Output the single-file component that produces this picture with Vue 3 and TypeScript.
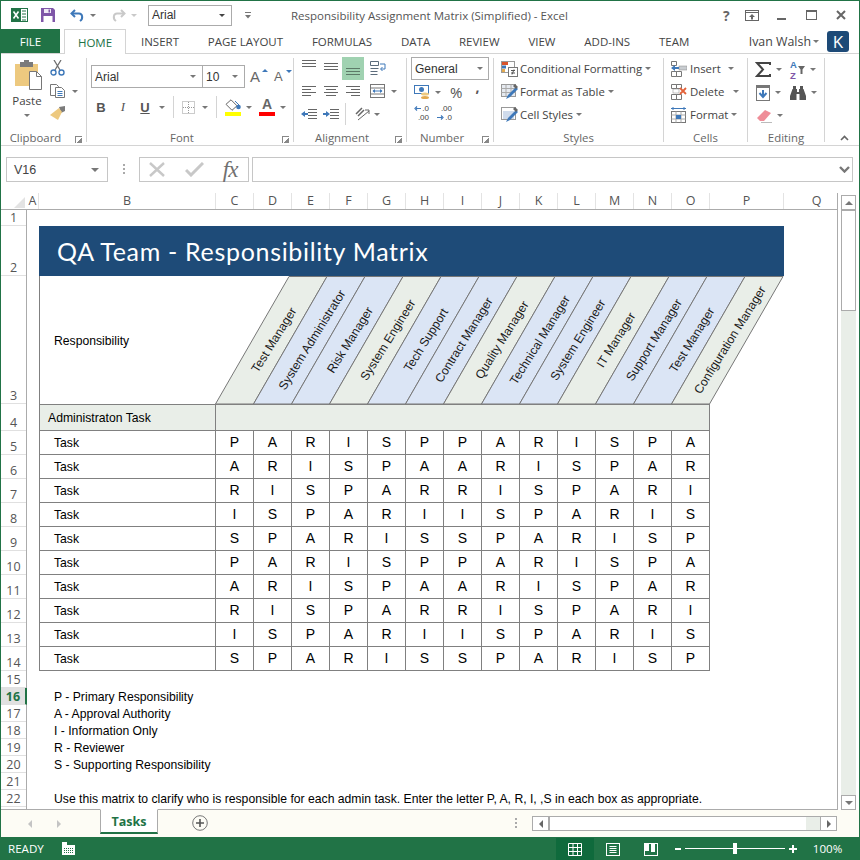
<script setup lang="ts">
const tabs: string[] = ['INSERT', 'PAGE LAYOUT', 'FORMULAS', 'DATA', 'REVIEW', 'VIEW', 'ADD-INS', 'TEAM']
const columns: string[] = ['A', 'B', 'C', 'D', 'E', 'F', 'G', 'H', 'I', 'J', 'K', 'L', 'M', 'N', 'O', 'P', 'Q']

// sheet row heights, row 1 to row 22
const rowHeights: number[] = [16, 50, 128, 27, ...Array(10).fill(24), ...Array(8).fill(17)]

const roles: string[] = [
  'Test Manager', 'System Administrator', 'Risk Manager', 'System Engineer', 'Tech Support',
  'Contract Manager', 'Quality Manager', 'Technical Manager', 'System Engineer', 'IT Manager',
  'Support Manager', 'Test Manager', 'Configuration Manager'
]

const cycle: string[][] = [
  ['P', 'A', 'R', 'I', 'S', 'P', 'P', 'A', 'R', 'I', 'S', 'P', 'A'],
  ['A', 'R', 'I', 'S', 'P', 'A', 'A', 'R', 'I', 'S', 'P', 'A', 'R'],
  ['R', 'I', 'S', 'P', 'A', 'R', 'R', 'I', 'S', 'P', 'A', 'R', 'I'],
  ['I', 'S', 'P', 'A', 'R', 'I', 'I', 'S', 'P', 'A', 'R', 'I', 'S'],
  ['S', 'P', 'A', 'R', 'I', 'S', 'S', 'P', 'A', 'R', 'I', 'S', 'P']
]
const taskRows: string[][] = [...cycle, ...cycle]

const legend: string[] = [
  'P - Primary Responsibility',
  'A - Approval Authority',
  'I - Information Only',
  'R - Reviewer',
  'S - Supporting Responsibility'
]

// every third column has the grey-green tint, the others are blue
function slantFill(i: number): string {
  return i % 3 === 0 ? '#e9eee8' : '#dbe5f5'
}

function slantPoints(i: number): string {
  const x = i * 38
  return `${x - 0.5},128 ${x + 37.5},128 ${x + 111},0.5 ${x + 73},0.5`
}
</script>

<template>
  <div class="window">
    <!-- title bar -->
    <div class="titlebar">
      <svg class="xl-icon" width="17" height="16" viewBox="0 0 17 16">
        <rect x="5.5" y="1.5" width="11" height="13" fill="#fff" stroke="#217346" />
        <path d="M11 4h4M11 7h4M11 10h4M11 13h4" stroke="#217346" />
        <rect x="0" y="1" width="10" height="14" fill="#217346" />
        <path d="M2.5 4.5l5 7M7.5 4.5l-5 7" stroke="#fff" stroke-width="1.6" />
      </svg>
      <svg class="save-icon" width="14" height="14" viewBox="0 0 14 14">
        <path d="M0 0h12l2 2v12H0z" fill="#7f56a8" />
        <rect x="3" y="1" width="7" height="4" fill="#efe8f5" />
        <rect x="2.5" y="8" width="9" height="6" fill="#fff" />
        <rect x="7.5" y="1.5" width="1.5" height="3" fill="#7f56a8" />
      </svg>
      <svg class="undo-icon" width="15" height="13" viewBox="0 0 15 13">
        <path d="M5 1L1.5 4.5 5 8" fill="none" stroke="#3e78b9" stroke-width="2" />
        <path d="M2 4.5h7c3.500 0 4.500 5 1 7.500" fill="none" stroke="#3e78b9" stroke-width="2" />
      </svg>
      <i class="caret qat-caret"></i>
      <svg class="redo-icon" width="15" height="13" viewBox="0 0 15 13">
        <path d="M10 1l3.500 3.500L10 8" fill="none" stroke="#c9c9c9" stroke-width="2" />
        <path d="M13 4.500H6c-3.500 0-4.500 5-1 7.500" fill="none" stroke="#c9c9c9" stroke-width="2" />
      </svg>
      <i class="caret qat-caret light"></i>
      <div class="qat-font">
        <span>Arial</span>
        <i class="caret dark"></i>
      </div>
      <svg class="custom-icon" width="6" height="7" viewBox="0 0 6 7">
        <path d="M0 .5h6" stroke="#777" />
        <path d="M0 3h6L3 6.500z" fill="#777" />
      </svg>
      <span class="doc-title">Responsibility Assignment Matrix (Simplified) - Excel</span>
      <span class="help">?</span>
      <svg class="display-icon" width="14" height="11" viewBox="0 0 14 11">
        <rect x=".5" y=".5" width="13" height="10" fill="none" stroke="#666" />
        <path d="M.5 2.500h13" stroke="#666" />
        <path d="M7 4l3 3H8v2.500H6V7H4z" fill="#666" />
      </svg>
      <svg class="min-icon" width="9" height="2" viewBox="0 0 9 2"><rect width="9" height="2" fill="#666" /></svg>
      <svg class="max-icon" width="11" height="10" viewBox="0 0 11 10">
        <rect x=".5" y=".5" width="10" height="9" fill="none" stroke="#666" />
        <rect width="11" height="2" fill="#666" />
      </svg>
      <svg class="close-icon" width="10" height="10" viewBox="0 0 10 10">
        <path d="M1 1l8 8M9 1L1 9" stroke="#666" stroke-width="2" />
      </svg>
    </div>

    <!-- ribbon tabs -->
    <div class="tabbar">
      <div class="file-tab">FILE</div>
      <div class="home-tab">HOME</div>
      <div class="tab-list">
        <span v-for="tab in tabs" :key="tab">{{ tab }}</span>
      </div>
      <span class="user">Ivan Walsh</span>
      <i class="caret user-caret"></i>
      <div class="avatar">K</div>
    </div>

    <!-- ribbon -->
    <div class="ribbon">
      <section class="group clipboard">
        <div class="clip-body">
          <div class="paste">
            <svg width="29" height="30" viewBox="0 0 29 30">
              <rect x="1" y="4" width="23" height="22" fill="#edc97f" />
              <rect x="6" y="2" width="13" height="5" fill="#7b7b7b" />
              <rect x="10" y="0" width="5" height="3" fill="#7b7b7b" />
              <path d="M15.500 11.500h7l5 5v13h-12z" fill="#fff" stroke="#777" />
              <path d="M22.500 11.500v5h5" fill="none" stroke="#777" />
            </svg>
            <span>Paste</span>
            <i class="caret"></i>
          </div>
          <div class="clip-tools">
            <svg width="15" height="16" viewBox="0 0 15 16">
              <path d="M4 0l6 10M11 0L5 10" stroke="#6f6f6f" stroke-width="1.300" />
              <circle cx="3.500" cy="12.500" r="2.500" fill="none" stroke="#3e78b9" stroke-width="1.400" />
              <circle cx="11.500" cy="12.500" r="2.500" fill="none" stroke="#3e78b9" stroke-width="1.400" />
            </svg>
            <div class="tool-line">
              <svg width="16" height="14" viewBox="0 0 16 14">
                <path d="M.5.500h6l2 2v9H.5z" fill="#fff" stroke="#777" />
                <path d="M5.500 3.500h6l3 3v7h-9z" fill="#fff" stroke="#777" />
                <path d="M7.500 7.500h5M7.500 9.500h5M7.500 11.500h5" stroke="#3e78b9" />
              </svg>
              <i class="caret"></i>
            </div>
            <svg width="16" height="14" viewBox="0 0 16 14">
              <path d="M9 1l6-1v5l-4 2z" fill="#7b7b7b" />
              <path d="M9 2l3 4-4 8-8-5z" fill="#edc97f" />
            </svg>
          </div>
        </div>
        <footer class="with-launcher">Clipboard</footer>
        <i class="launcher"></i>
      </section>

      <section class="group font">
        <div class="font-select">
          <div class="fbox name"><span>Arial</span><i class="caret"></i></div>
          <div class="fbox size"><span>10</span><i class="caret"></i></div>
          <span class="grow">A<i class="up"></i></span>
          <span class="shrink">A<i class="down"></i></span>
        </div>
        <div class="font-tools">
          <b>B</b>
          <em>I</em>
          <u>U</u>
          <i class="caret c-u"></i>
          <span class="sep"></span>
          <svg width="13" height="13" viewBox="0 0 13 13">
            <rect x=".5" y=".5" width="12" height="12" fill="none" stroke="#999" stroke-dasharray="1 1" />
            <path d="M6.500 1v11M1 6.500h11" stroke="#999" stroke-dasharray="1 1" />
          </svg>
          <i class="caret c-border"></i>
          <span class="sep"></span>
          <div class="fill-tool">
            <svg width="16" height="12" viewBox="0 0 16 12">
              <path d="M6 .8l6 6-5 4.500-6-6z" fill="#fff" stroke="#666" />
              <circle cx="13.500" cy="8" r="2.300" fill="#3e78b9" />
              <path d="M10 2l4 4" stroke="#3e78b9" />
            </svg>
            <span class="swatch yellow"></span>
          </div>
          <i class="caret c-fill"></i>
          <div class="color-tool">
            <span>A</span>
            <span class="swatch red"></span>
          </div>
          <i class="caret c-fill"></i>
        </div>
        <footer class="with-launcher">Font</footer>
        <i class="launcher"></i>
      </section>

      <section class="group alignment">
        <div class="align-row first">
          <svg class="lines v-top" width="14" height="8" viewBox="0 0 14 8"><path d="M0 .5h14M0 3.500h14M0 6.500h14" stroke="#666" /></svg>
          <svg class="lines v-mid" width="14" height="8" viewBox="0 0 14 8"><path d="M0 .5h14M0 3.500h14M0 6.500h14" stroke="#666" /></svg>
          <span class="align-on">
            <svg class="lines" width="14" height="8" viewBox="0 0 14 8"><path d="M0 .5h14M0 3.500h14M0 6.500h14" stroke="#5d7a68" /></svg>
          </span>
          <svg width="16" height="15" viewBox="0 0 16 15">
            <path d="M.5 .5h8v4h-8zM.5 7.500h8M.5 10.500h7M.5 13.500h7" fill="none" stroke="#5c6c7c" />
            <path d="M10 3h5v5h-4M12.500 6l-2 2 2 2" fill="none" stroke="#3e78b9" />
          </svg>
        </div>
        <div class="align-row second">
          <svg class="lines" width="14" height="11" viewBox="0 0 14 11"><path d="M0 .5h14M0 3.500h9M0 6.500h14M0 9.500h9" stroke="#666" /></svg>
          <svg class="lines" width="14" height="11" viewBox="0 0 14 11"><path d="M0 .5h14M2 3.500h10M0 6.500h14M2 9.500h10" stroke="#666" /></svg>
          <svg class="lines" width="14" height="11" viewBox="0 0 14 11"><path d="M0 .5h14M5 3.500h9M0 6.500h14M5 9.500h9" stroke="#666" /></svg>
          <svg class="merge" width="15" height="14" viewBox="0 0 15 14">
            <rect x=".5" y=".5" width="14" height="13" fill="none" stroke="#777" />
            <path d="M.5 4h14M.5 10h14" stroke="#777" />
            <path d="M3 7h9" stroke="#3e78b9" />
            <path d="M5 5l-2.500 2L5 9zM10 5l2.500 2L10 9z" fill="#3e78b9" />
          </svg>
          <i class="caret"></i>
        </div>
        <div class="align-row third">
          <svg width="16" height="11" viewBox="0 0 16 11">
            <path d="M7 .5h9M7 3.500h9M7 6.500h9M7 9.500h9" stroke="#666" />
            <path d="M0 5l4-3v2h3v2H4v2z" fill="#3e78b9" />
          </svg>
          <svg width="16" height="11" viewBox="0 0 16 11">
            <path d="M7 .5h9M7 3.500h9M7 6.500h9M7 9.500h9" stroke="#666" />
            <path d="M7 5L3 2v2H0v2h3v2z" fill="#3e78b9" />
          </svg>
          <span class="sep"></span>
          <svg class="orient" width="15" height="14" viewBox="0 0 15 14">
            <path d="M1 7l6-6M3 9l6-6" stroke="#666" stroke-width="1.500" />
            <path d="M3 13L14 4" stroke="#666" />
            <path d="M14 3v4M14 3h-4" stroke="#666" />
          </svg>
          <i class="caret"></i>
        </div>
        <footer class="with-launcher">Alignment</footer>
        <i class="launcher"></i>
      </section>

      <section class="group number">
        <div class="num-select"><span>General</span><i class="caret"></i></div>
        <div class="num-row">
          <svg width="16" height="15" viewBox="0 0 16 15">
            <rect x=".5" y=".5" width="14" height="8" fill="#fff" stroke="#3e78b9" />
            <circle cx="7.500" cy="4.500" r="2.500" fill="#3e78b9" />
            <ellipse cx="11" cy="9" rx="4" ry="1.600" fill="#edc97f" />
            <ellipse cx="11" cy="12.500" rx="4" ry="1.600" fill="#e2a94f" />
          </svg>
          <i class="caret"></i>
          <span class="pct">%</span>
          <span class="comma">,</span>
        </div>
        <div class="num-row decimals">
          <div class="dec">
            <div class="dec-line">
              <svg width="7" height="5" viewBox="0 0 7 5"><path d="M7 2.500H2M3 .5L1 2.500l2 2" fill="none" stroke="#3e78b9" stroke-width="1.200" /></svg>
              <span>.0</span>
            </div>
            <span>.00</span>
          </div>
          <div class="dec two">
            <span>.00</span>
            <div class="dec-line">
              <svg width="7" height="5" viewBox="0 0 7 5"><path d="M0 2.500h5M4 .5l2 2-2 2" fill="none" stroke="#3e78b9" stroke-width="1.200" /></svg>
              <span>.0</span>
            </div>
          </div>
        </div>
        <footer class="with-launcher">Number</footer>
        <i class="launcher"></i>
      </section>

      <section class="group styles">
        <div class="style-row">
          <svg width="17" height="16" viewBox="0 0 17 16">
            <rect x=".5" y=".5" width="13" height="11" fill="#fff" stroke="#999" />
            <rect x="1" y="1" width="6" height="3" fill="#d9542b" />
            <rect x="1" y="4.500" width="4" height="3" fill="#3e78b9" />
            <rect x="1" y="8" width="3" height="3" fill="#e2a94f" />
            <rect x="7.500" y="6.500" width="9" height="9" fill="#fff" stroke="#777" />
            <path d="M10 9.500h4M10 12h4M13 8.500l-2 5" stroke="#555" />
          </svg>
          <span>Conditional Formatting</span><i class="caret"></i>
        </div>
        <div class="style-row">
          <svg width="17" height="16" viewBox="0 0 17 16">
            <rect x=".5" y=".5" width="14" height="12" fill="#e6eaf0" stroke="#999" />
            <path d="M.5 4.500h14M.5 8.500h14M5 .5v12M10 .5v12" stroke="#aaa" />
            <path d="M5 15l2-4 8-8 2 2-8 8z" fill="#3e78b9" />
            <path d="M12 2l2-2 3 3-2 2z" fill="#666" />
          </svg>
          <span>Format as Table</span><i class="caret"></i>
        </div>
        <div class="style-row">
          <svg width="17" height="16" viewBox="0 0 17 16">
            <rect x=".5" y=".5" width="14" height="12" fill="#fff" stroke="#999" />
            <rect x="2" y="4" width="11" height="8" fill="#cfdbec" />
            <path d="M5 15l2-4 8-8 2 2-8 8z" fill="#3e78b9" />
            <path d="M12 2l2-2 3 3-2 2z" fill="#666" />
          </svg>
          <span>Cell Styles</span><i class="caret"></i>
        </div>
        <footer>Styles</footer>
      </section>

      <section class="group cells">
        <div class="cell-row">
          <svg width="16" height="16" viewBox="0 0 16 16">
            <path d="M.5.500h5v4h-5zM.5 10.500h5v5h-5zM5.500 10.500h5v5h-5z" fill="#fff" stroke="#777" />
            <rect x="8" y="5" width="8" height="4" fill="#c8ccd0" stroke="#888" stroke-width=".5" />
            <path d="M0 7l4-3v2h4v2H4v2z" fill="#3e78b9" />
          </svg>
          <span>Insert</span><i class="caret insert"></i>
        </div>
        <div class="cell-row">
          <svg width="16" height="16" viewBox="0 0 16 16">
            <path d="M.5.500h5v4h-5zM5.500.500h5v4h-5zM.5 10.500h5v5h-5zM5.500 10.500h5v5h-5z" fill="#fff" stroke="#777" />
            <rect x="2" y="5" width="6" height="4" fill="#fff" stroke="#888" stroke-width=".5" />
            <path d="M9 4l6 6M15 4l-6 6" stroke="#e2633b" stroke-width="1.800" />
          </svg>
          <span>Delete</span><i class="caret delete"></i>
        </div>
        <div class="cell-row">
          <svg width="16" height="16" viewBox="0 0 16 16">
            <path d="M0 1.500h15M2 0v3M13 0v3" stroke="#3e78b9" />
            <rect x=".5" y="4.500" width="14" height="11" fill="#fff" stroke="#777" />
            <path d="M.5 8h14M.5 12h14M5 4.500v11M10 4.500v11" stroke="#aaa" />
            <rect x="5" y="8" width="5" height="4" fill="#3e78b9" />
          </svg>
          <span>Format</span><i class="caret format"></i>
        </div>
        <footer>Cells</footer>
      </section>

      <section class="group editing">
        <div class="edit-row">
          <svg class="sigma" width="16" height="15" viewBox="0 0 16 15">
            <path d="M15 3V1H2l6 6.500L2 14h13v-2" fill="none" stroke="#444" stroke-width="2" />
          </svg>
          <i class="caret"></i>
          <div class="sort">
            <span class="sort-letters"><span class="a">A</span><span class="z">Z</span></span>
            <svg width="7" height="8" viewBox="0 0 7 8"><path d="M0 0h7L4.500 3.500V8h-2V3.500z" fill="#666" /></svg>
          </div>
          <i class="caret"></i>
        </div>
        <div class="edit-row">
          <svg class="fill-down" width="14" height="16" viewBox="0 0 14 16">
            <rect x=".5" y=".5" width="13" height="15" fill="#fff" stroke="#777" />
            <rect y="0" width="14" height="3" fill="#777" />
            <path d="M7 5v6M3.500 8L7 12l3.500-4" fill="none" stroke="#3e78b9" stroke-width="2" />
          </svg>
          <i class="caret"></i>
          <svg class="binoc" width="16" height="14" viewBox="0 0 16 14">
            <rect x="3" y="0" width="3" height="4" fill="#555" />
            <rect x="10" y="0" width="3" height="4" fill="#555" />
            <path d="M2.500 3h4.500v3h2V3h4.500L16 10v4H9.500V8h-3v6H0v-4z" fill="#555" />
          </svg>
          <i class="caret"></i>
        </div>
        <div class="edit-row">
          <svg class="eraser" width="16" height="14" viewBox="0 0 16 14">
            <path d="M1 9l8-8 6 3-7 8H4z" fill="#ef8d98" />
            <path d="M5 14h11" stroke="#777" />
          </svg>
          <i class="caret"></i>
        </div>
        <footer>Editing</footer>
      </section>

      <svg class="collapse" width="9" height="6" viewBox="0 0 9 6">
        <path d="M1 5l3.500-3.500L8 5" fill="none" stroke="#666" stroke-width="1.600" />
      </svg>
    </div>

    <!-- formula bar -->
    <div class="formula-bar">
      <div class="name-box"><span>V16</span><i class="caret"></i></div>
      <span class="grip"></span>
      <div class="fx-box">
        <svg width="16" height="15" viewBox="0 0 16 15"><path d="M1 1l14 13M15 1L1 14" stroke="#c8c8c8" stroke-width="2.400" /></svg>
        <svg width="19" height="15" viewBox="0 0 19 15"><path d="M1 8l5 5L18 1" fill="none" stroke="#c8c8c8" stroke-width="3" /></svg>
        <span class="fx">fx</span>
      </div>
      <div class="formula-input">
        <svg width="11" height="7" viewBox="0 0 11 7"><path d="M1 1l4.500 4.500L10 1" fill="none" stroke="#777" stroke-width="2.400" /></svg>
      </div>
    </div>

    <!-- worksheet -->
    <div class="sheet-row">
      <div class="sheet">
        <div class="col-heads">
          <div class="corner"><i></i></div>
          <div class="col-labels">
            <span v-for="col in columns" :key="col">{{ col }}</span>
          </div>
        </div>
        <div class="sheet-body">
          <div class="row-heads">
            <div
              v-for="(height, i) in rowHeights"
              :key="i"
              class="row-head"
              :class="{ active: i === 15 }"
              :style="{ height: height + 'px' }"
            >
              {{ i + 1 }}
            </div>
          </div>
          <div class="cells-grid">
            <div class="spacer"></div>
            <div class="band">QA Team - Responsibility Matrix</div>
            <div class="resp">Responsibility</div>
            <svg class="slants" width="568" height="128" viewBox="0 0 568 128">
              <template v-for="(role, i) in roles" :key="i">
                <polygon :points="slantPoints(i)" :fill="slantFill(i)" stroke="#777" />
                <text
                  :transform="`translate(${58 + i * 38} 64) rotate(-58)`"
                  text-anchor="middle"
                  y="4"
                >{{ role }}</text>
              </template>
            </svg>
            <div class="admin">Administraton Task</div>
            <div class="admin-span"></div>
            <template v-for="(row, r) in taskRows" :key="r">
              <div class="task">Task</div>
              <div v-for="(mark, c) in row" :key="c" class="mark">{{ mark }}</div>
            </template>
            <div class="spacer"></div>
            <div v-for="line in legend" :key="line" class="note">{{ line }}</div>
            <div class="spacer"></div>
            <div class="note">Use this matrix to clarify who is responsible for each admin task. Enter the letter P, A, R, I, ,S in each box as appropriate.</div>
          </div>
        </div>
      </div>
      <div class="vscroll">
        <div class="vbtn"><i class="tri-up"></i></div>
        <div class="vthumb"></div>
        <div class="vtrack"></div>
        <div class="vbtn"><i class="tri-down"></i></div>
      </div>
    </div>

    <!-- sheet tabs -->
    <div class="sheet-tabs">
      <i class="nav-left"></i>
      <i class="nav-right"></i>
      <div class="sheet-tab">Tasks</div>
      <svg class="add-sheet" width="16" height="16" viewBox="0 0 16 16">
        <circle cx="8" cy="8" r="7.300" fill="none" stroke="#777" />
        <path d="M8 4v8M4 8h8" stroke="#555" stroke-width="1.600" />
      </svg>
      <span class="tab-grip"></span>
      <div class="hscroll">
        <div class="hbtn"><i class="tri-left"></i></div>
        <div class="hthumb"></div>
        <div class="htrack"></div>
        <div class="hbtn"><i class="tri-right"></i></div>
      </div>
    </div>

    <!-- status bar -->
    <div class="statusbar">
      <span class="ready">READY</span>
      <svg class="macro" width="13" height="13" viewBox="0 0 13 13">
        <rect x="0" y="3" width="13" height="10" fill="#fff" />
        <rect x="0" y="0" width="5" height="5" fill="#fff" />
        <path d="M2 6.500h9M2 8.500h9M2 10.500h9" stroke="#217346" stroke-dasharray="1 1" />
      </svg>
      <div class="view active-view">
        <svg width="14" height="13" viewBox="0 0 14 13">
          <path d="M.5.500h13v12H.5zM.5 4.500h13M.5 8.500h13M5 .5v12M9.500 .5v12" fill="none" stroke="#fff" />
        </svg>
      </div>
      <div class="view">
        <svg width="14" height="13" viewBox="0 0 14 13">
          <rect x=".5" y=".5" width="13" height="12" fill="none" stroke="#fff" />
          <path d="M3.500 3.500h7M3.500 5.500h7M3.500 7.500h7M3.500 9.500h7" stroke="#fff" />
        </svg>
      </div>
      <div class="view">
        <svg width="14" height="13" viewBox="0 0 14 13">
          <rect x=".5" y=".5" width="13" height="12" fill="none" stroke="#fff" />
          <rect x="1" y="1" width="4" height="7" fill="#fff" />
          <rect x="7" y="1" width="4" height="8" fill="#fff" />
        </svg>
      </div>
      <div class="zoom">
        <span class="zoom-sign minus"></span>
        <div class="slider"><i></i></div>
        <span class="zoom-sign plus"></span>
      </div>
      <span class="zoom-pct">100%</span>
    </div>
  </div>
</template>

<style>
html,
body {
  margin: 0;
  background: #fff;
}
</style>

<style scoped>
.window {
  width: 860px;
  height: 860px;
  box-sizing: border-box;
  border: 1px solid #217346;
  border-bottom: none;
  display: flex;
  flex-direction: column;
  overflow: hidden;
  background: #fff;
  font-family: "Open Sans", "Noto Sans", sans-serif;
  font-size: 12px;
  color: #444;
}

i {
  font-style: normal;
}

.caret {
  display: inline-block;
  width: 0;
  height: 0;
  border: 3px solid transparent;
  border-top: 3px solid #777;
  border-bottom: 0;
}

.caret.light {
  border-top-color: #c9c9c9;
}

.caret.dark {
  border-top-color: #444;
}

/* title bar */
.titlebar {
  height: 28px;
  flex: none;
  display: flex;
  align-items: center;
}

.xl-icon {
  margin-left: 10px;
}

.save-icon {
  margin-left: 13px;
}

.undo-icon {
  margin-left: 15px;
}

.qat-caret {
  margin-left: 5px;
}

.redo-icon {
  margin-left: 15px;
}

.qat-font {
  width: 84px;
  height: 21px;
  box-sizing: border-box;
  margin-left: 11px;
  border: 1px solid #ababab;
  display: flex;
  align-items: center;
  justify-content: space-between;
  padding: 0 6px 0 3px;
  font-family: "Liberation Sans", sans-serif;
  font-size: 12px;
  color: #333;
}

.custom-icon {
  margin-left: 13px;
}

.doc-title {
  margin-left: 40px;
  width: 429px;
  white-space: nowrap;
  font-size: 11.5px;
  color: #555;
}

.help {
  font-weight: 700;
  font-size: 14px;
  color: #666;
  margin-left: 3px;
  width: 14px;
}

.display-icon {
  margin-left: 8px;
}

.min-icon {
  margin-left: 18px;
  margin-top: 8px;
}

.max-icon {
  margin-left: 20px;
}

.close-icon {
  margin-left: 19px;
}

/* tabs */
.tabbar {
  height: 25px;
  flex: none;
  display: flex;
  align-items: stretch;
  position: relative;
  border-bottom: 1px solid #d4d4d4;
  box-sizing: border-box;
  font-size: 11.5px;
}

.file-tab {
  width: 59px;
  background: #217346;
  color: #fff;
  display: flex;
  align-items: center;
  justify-content: center;
}

.home-tab {
  width: 62px;
  box-sizing: border-box;
  margin-left: 4px;
  margin-bottom: -1px;
  background: #fff;
  border: 1px solid #d4d4d4;
  border-bottom: none;
  color: #217346;
  display: flex;
  align-items: center;
  justify-content: center;
}

.tab-list {
  display: flex;
  align-items: center;
  gap: 28.8px;
  margin-left: 15px;
  white-space: nowrap;
  color: #444;
}

.user {
  margin-left: auto;
  align-self: center;
  font-size: 12.4px;
  color: #444;
}

.user-caret {
  align-self: center;
  margin-left: 2px;
}

.avatar {
  width: 22px;
  height: 21px;
  align-self: center;
  margin: 0 10px 0 8px;
  background: #1d4a77;
  border-radius: 3px;
  color: #fff;
  font-size: 17px;
  display: flex;
  align-items: center;
  justify-content: center;
}

/* ribbon */
.ribbon {
  height: 92px;
  flex: none;
  box-sizing: border-box;
  padding: 4px 0;
  border-bottom: 1px solid #d4d4d4;
  display: flex;
  position: relative;
}

.group {
  position: relative;
  box-sizing: border-box;
  height: 84px;
  border-right: 1px solid #d4d4d4;
}

.group footer {
  position: absolute;
  left: 0;
  right: 0;
  bottom: -4px;
  height: 17px;
  line-height: 17px;
  text-align: center;
  color: #666;
  font-size: 11.4px;
}

.group footer.with-launcher {
  padding-right: 16px;
}

.launcher {
  position: absolute;
  right: 4px;
  bottom: -1px;
  width: 7px;
  height: 7px;
  box-sizing: border-box;
  border-left: 1px solid #888;
  border-top: 1px solid #888;
  background: linear-gradient(135deg, transparent 55%, #888 55%);
}

.clipboard {
  width: 86px;
}

.clip-body {
  display: flex;
  padding: 2px 0 0 7px;
}

.paste {
  width: 38px;
  display: flex;
  flex-direction: column;
  align-items: center;
  color: #444;
}

.paste svg {
  margin-left: 2px;
}

.paste span {
  margin-top: 3px;
  font-size: 11.5px;
}

.paste .caret {
  margin-top: 6px;
}

.clip-tools {
  margin-left: 4px;
  display: flex;
  flex-direction: column;
  gap: 8px;
  align-items: flex-start;
}

.tool-line {
  display: flex;
  align-items: center;
  gap: 6px;
}

.font {
  width: 207px;
  padding: 7px 0 0 3px;
}

.font-select {
  display: flex;
  align-items: center;
  margin-left: 1px;
  font-family: "Liberation Sans", sans-serif;
}

.fbox {
  height: 23px;
  box-sizing: border-box;
  border: 1px solid #ababab;
  display: flex;
  align-items: center;
  justify-content: space-between;
  padding: 0 6px 0 3px;
  color: #333;
}

.fbox.name {
  width: 112px;
}

.fbox.size {
  width: 43px;
  margin-left: -1px;
}

.grow,
.shrink {
  position: relative;
  color: #666;
  font-size: 15px;
  margin-left: 5px;
  width: 15px;
}

.shrink {
  font-size: 13px;
  margin-left: 9px;
}

.up,
.down {
  position: absolute;
  top: 1px;
  right: -3px;
  border: 3px solid transparent;
  border-top: 0;
  border-bottom: 3px solid #3e78b9;
}

.down {
  border-top: 3px solid #3e78b9;
  border-bottom: 0;
}

.font-tools {
  margin-top: 10px;
  height: 18px;
  display: flex;
  align-items: center;
  font-family: "Liberation Serif", serif;
  font-size: 13px;
  color: #555;
}

.font-tools b,
.font-tools em,
.font-tools u {
  width: 22px;
  text-align: center;
}

.font-tools b,
.font-tools u {
  font-family: "Liberation Sans", sans-serif;
}

.font-tools u {
  font-weight: 700;
}

.c-u {
  margin-left: 3px;
}

.c-border {
  margin-left: 7px;
}

.c-fill {
  margin-left: 5px;
}

.font-tools .sep {
  width: 1px;
  height: 22px;
  background: #d4d4d4;
  margin: 0 8px;
}

.fill-tool,
.color-tool {
  width: 16px;
  display: flex;
  flex-direction: column;
  align-items: center;
}

.color-tool {
  margin-left: 7px;
  font-family: "Liberation Sans", sans-serif;
  font-size: 14px;
  font-weight: 700;
  line-height: 13px;
  color: #666;
}

.swatch {
  width: 16px;
  height: 4px;
  margin-top: 1px;
}

.yellow {
  background: #ffff00;
}

.red {
  background: #ff0000;
}

.alignment {
  width: 113px;
  padding-left: 7px;
}

.align-row {
  display: flex;
  align-items: center;
}

.align-row.first {
  height: 23px;
  margin-top: -1px;
  padding-left: 1px;
}

.align-row .lines {
  margin-right: 8px;
}

.align-row .v-top {
  margin-bottom: 10px;
}

.align-row .v-mid {
  margin-bottom: 4px;
}

.align-on {
  width: 22px;
  height: 23px;
  margin: 0 6px 0 -4px;
  background: #a0d2b1;
  display: flex;
  align-items: center;
  justify-content: center;
}

.align-on .lines {
  margin: 6px 0 0;
}

.align-row.second {
  height: 22px;
  padding-left: 1px;
}

.merge {
  margin-left: 2px;
  margin-right: 6px;
}

.align-row.third {
  height: 22px;
  margin-top: 1px;
  gap: 6px;
}

.align-row.third .sep {
  width: 1px;
  height: 22px;
  background: #d4d4d4;
}

.orient {
  margin-left: 3px;
}

.align-row.third .caret {
  margin-left: -2px;
}

.number {
  width: 87px;
  padding: 0 0 0 4px;
}

.num-select {
  width: 78px;
  height: 23px;
  box-sizing: border-box;
  margin-top: -1px;
  border: 1px solid #ababab;
  display: flex;
  align-items: center;
  justify-content: space-between;
  padding: 0 5px 0 3px;
  font-family: "Liberation Sans", sans-serif;
  color: #333;
}

.num-row {
  display: flex;
  align-items: center;
  height: 22px;
  margin-top: 1px;
  padding-left: 3px;
}

.num-row .caret {
  margin-left: 5px;
}

.pct {
  margin-left: 9px;
  font-size: 15px;
  color: #555;
}

.comma {
  margin: 0 0 10px 13px;
  font-weight: 700;
  font-size: 14px;
  line-height: 10px;
  color: #555;
}

.decimals {
  margin-top: -1px;
}

.dec {
  width: 15px;
  font-family: "Liberation Sans", sans-serif;
  font-size: 8px;
  line-height: 9.300px;
  color: #444;
  text-align: right;
}

.dec > span {
  display: block;
}

.dec-line {
  display: flex;
  align-items: center;
  justify-content: flex-end;
  gap: 1px;
}

.dec.two {
  margin-left: 8px;
}

.styles {
  width: 170px;
  padding: 0 0 0 7px;
}

.style-row,
.cell-row {
  height: 23px;
  margin-top: -1px;
  margin-bottom: 1px;
  display: flex;
  align-items: center;
  white-space: nowrap;
  font-size: 11.4px;
}

.style-row span {
  margin-left: 2px;
}

.style-row .caret {
  margin-left: 3px;
}

.cells {
  width: 84px;
  padding: 0 0 0 7px;
}

.cell-row span {
  margin-left: 3px;
}

.insert {
  margin-left: 7px;
}

.delete {
  margin-left: 9px;
}

.format {
  margin-left: 3px;
}

.editing {
  width: 77px;
  padding: 0 0 0 7px;
}

.edit-row {
  height: 23px;
  display: flex;
  align-items: center;
}

.edit-row > .caret {
  margin-left: 5px;
}

.sort {
  margin-left: 8px;
  display: flex;
  align-items: center;
  gap: 1px;
  font-family: "Liberation Sans", sans-serif;
}

.sort-letters {
  display: flex;
  flex-direction: column;
  font-size: 9.500px;
  line-height: 11px;
  font-weight: 700;
}

.sort-letters .a {
  color: #3e78b9;
}

.sort-letters .z {
  color: #7f56a8;
}

.fill-down {
  margin-left: 1px;
}

.binoc {
  margin-left: 9px;
}

.eraser {
  margin-left: 1px;
}

.collapse {
  margin-left: 15px;
  margin-top: 77px;
}

/* formula bar */
.formula-bar {
  height: 47px;
  flex: none;
  box-sizing: border-box;
  padding: 11px 6px 11px 5px;
  display: flex;
}

.name-box,
.fx-box,
.formula-input {
  height: 25px;
  box-sizing: border-box;
  border: 1px solid #c6c6c6;
  display: flex;
  align-items: center;
}

.name-box {
  width: 102px;
  justify-content: space-between;
  padding: 0 8px 0 7px;
  font-family: "Liberation Sans", sans-serif;
  font-size: 12.500px;
  color: #444;
}

.name-box .caret {
  border-width: 4px;
  border-bottom: 0;
}

.grip {
  width: 2px;
  height: 11px;
  margin: 7px 14px 0 15px;
  background: repeating-linear-gradient(#aaa 0 2px, transparent 2px 4px);
}

.fx-box {
  width: 110px;
  padding-left: 9px;
}

.fx-box svg + svg {
  margin-left: 20px;
}

.fx {
  margin-left: 19px;
  font-family: "Liberation Serif", serif;
  font-style: italic;
  font-size: 23px;
  letter-spacing: -1px;
  color: #707070;
}

.formula-input {
  width: 603px;
  margin-left: 3px;
  justify-content: flex-end;
  padding-right: 2px;
}

/* sheet */
.sheet-row {
  height: 617px;
  flex: none;
  display: flex;
}

.sheet {
  width: 837px;
  box-sizing: border-box;
  flex: none;
  border-right: 1px solid #ababab;
  border-bottom: 1px solid #ababab;
  font-family: "Liberation Sans", sans-serif;
  color: #000;
  overflow: hidden;
}

.col-heads {
  height: 17px;
  box-sizing: border-box;
  display: flex;
  border-bottom: 1px solid #ababab;
  font-family: "Open Sans", sans-serif;
  font-size: 12.5px;
  color: #555;
}

.corner {
  width: 26px;
  flex: none;
  position: relative;
}

.corner i {
  position: absolute;
  right: 2px;
  bottom: 1px;
  border-style: solid;
  border-width: 0 0 11px 11px;
  border-color: transparent transparent #e3e3e3 transparent;
}

.col-labels {
  display: grid;
  grid-template-columns: 12px 177px repeat(13, 38px) 74px 1fr;
  flex: 1;
  line-height: 16px;
}

.col-labels span {
  text-align: center;
  border-right: 1px solid #e3e3e3;
  box-sizing: border-box;
}

.col-labels span:last-child {
  border-right: none;
  padding-left: 12px;
}

.sheet-body {
  display: flex;
  height: 599px;
}

.row-heads {
  width: 26px;
  flex: none;
  border-right: 1px solid #ababab;
  box-sizing: border-box;
  font-family: "Open Sans", sans-serif;
  font-size: 12.5px;
  color: #555;
}

.row-head {
  box-sizing: border-box;
  border-bottom: 1px solid #e0e0e0;
  display: flex;
  align-items: flex-end;
  justify-content: center;
  line-height: 14px;
}

.row-head.active {
  background: #e1e1e1;
  color: #217346;
  font-weight: 700;
  margin-right: -1px;
  border-right: 2px solid #217346;
}

.cells-grid {
  flex: 1;
  display: grid;
  grid-template-columns: 12px 177px repeat(13, 38px) 74px 1fr;
  grid-template-rows: 16px 50px 128px 27px repeat(10, 24px) repeat(8, 17px) 2px;
  font-size: 12.2px;
}

.spacer {
  grid-column: 1 / -1;
}

.band {
  grid-column: 2 / 17;
  background: #1e4b78;
  color: #fff;
  padding-left: 18px;
  font-family: "Lato", sans-serif;
  font-size: 25px;
  letter-spacing: .68px;
  line-height: 50px;
  white-space: nowrap;
}

.resp {
  grid-column: 2;
  border-left: 1px solid #808080;
  padding-left: 14px;
  line-height: 130px;
}

.slants {
  grid-column: 3 / 17;
  overflow: visible;
}

.slants text {
  font-family: "Liberation Sans", sans-serif;
  font-size: 12.2px;
  fill: #1a1a1a;
}

.admin {
  grid-column: 2;
  box-sizing: border-box;
  background: #e9eee8;
  border: 1px solid #808080;
  padding-left: 8px;
  line-height: 27px;
}

.admin-span {
  grid-column: 3 / 16;
  background: #e9eee8;
  border-top: 1px solid #808080;
  border-bottom: 1px solid #808080;
  border-right: 1px solid #808080;
}

.task {
  grid-column: 2;
  box-sizing: border-box;
  border: 1px solid #808080;
  border-top: none;
  padding-left: 14px;
  line-height: 25px;
}

.mark {
  box-sizing: border-box;
  border-right: 1px solid #808080;
  border-bottom: 1px solid #808080;
  text-align: center;
  font-size: 14px;
  line-height: 23px;
}

.note {
  grid-column: 2 / -1;
  padding: 1px 0 0 15px;
  line-height: 17px;
  white-space: nowrap;
}

/* scrollbars */
.vscroll {
  flex: 1;
  display: flex;
  flex-direction: column;
  align-items: center;
  padding: 2px 3px 0 3px;
}

.vbtn {
  width: 15px;
  height: 15px;
  flex: none;
  box-sizing: border-box;
  border: 1px solid #ababab;
  display: flex;
  align-items: center;
  justify-content: center;
}

.vthumb {
  width: 15px;
  height: 102px;
  flex: none;
  box-sizing: border-box;
  border: 1px solid #ababab;
  border-top: 2px solid #ababab;
  margin-top: -1px;
}

.vtrack {
  width: 15px;
  flex: 1;
  background: #e9eee8;
}

.tri-up,
.tri-down,
.tri-left,
.tri-right {
  width: 0;
  height: 0;
  border: 4px solid transparent;
}

.tri-up {
  border-top: 0;
  border-bottom: 4px solid #777;
}

.tri-down {
  border-bottom: 0;
  border-top: 4px solid #777;
}

.tri-left {
  border-left: 0;
  border-right: 4px solid #666;
}

.tri-right {
  border-right: 0;
  border-left: 4px solid #666;
}

/* sheet tabs */
.sheet-tabs {
  height: 27px;
  flex: none;
  display: flex;
  align-items: flex-start;
  background: #fdfcf5;
  position: relative;
}

.nav-left,
.nav-right {
  margin-top: 10px;
  width: 0;
  height: 0;
  border: 4px solid transparent;
}

.nav-left {
  margin-left: 27px;
  border-left: 0;
  border-right: 4px solid #c4c4c4;
}

.nav-right {
  margin-left: 25px;
  border-right: 0;
  border-left: 4px solid #c4c4c4;
}

.sheet-tab {
  width: 58px;
  height: 25px;
  box-sizing: border-box;
  margin-left: 39px;
  margin-top: -1px;
  background: #fff;
  border: 1px solid #ababab;
  border-top-color: #fff;
  border-bottom: 2px solid #217346;
  text-align: center;
  line-height: 24px;
  font-weight: 700;
  font-size: 12.500px;
  color: #217346;
}

.add-sheet {
  margin: 5px 0 0 34px;
}

.tab-grip {
  width: 2px;
  height: 11px;
  margin: 8px 0 0 307px;
  background: repeating-linear-gradient(#aaa 0 2px, transparent 2px 4px);
}

.hscroll {
  width: 305px;
  height: 15px;
  margin: 6px 0 0 15px;
  display: flex;
  box-sizing: border-box;
  border: 1px solid #ababab;
  background: #e9eee8;
}

.hbtn {
  width: 15px;
  height: 13px;
  flex: none;
  background: #fff;
  display: flex;
  align-items: center;
  justify-content: center;
}

.hthumb {
  width: 258px;
  flex: none;
  background: #fff;
  border-left: 2px solid #ababab;
  box-sizing: border-box;
}

.htrack {
  flex: 1;
  border-right: 1px solid #ababab;
}

/* status bar */
.statusbar {
  height: 23px;
  flex: none;
  margin: 0 -1px;
  background: #217346;
  color: #fff;
  display: flex;
  align-items: center;
  font-size: 11.6px;
}

.ready {
  margin-left: 8px;
}

.macro {
  margin-left: 18px;
}

.view {
  width: 38px;
  height: 22px;
  display: flex;
  align-items: center;
  justify-content: center;
  margin-top: 1px;
}

.active-view {
  margin-left: 481px;
  background: #0f6a3c;
}

.zoom {
  display: flex;
  align-items: center;
  margin-left: 5px;
}

.zoom-sign {
  width: 6px;
  height: 2px;
  background: #fff;
  position: relative;
}

.zoom-sign.plus {
  width: 8px;
}

.zoom-sign.plus::after {
  content: "";
  position: absolute;
  left: 3px;
  top: -3px;
  width: 2px;
  height: 8px;
  background: #fff;
}

.slider {
  width: 100px;
  height: 1px;
  background: #fff;
  position: relative;
  margin: 0 4px;
}

.slider i {
  position: absolute;
  left: 48px;
  top: -5px;
  width: 4px;
  height: 11px;
  background: #fff;
}

.zoom-pct {
  margin-left: 16px;
}
</style>
